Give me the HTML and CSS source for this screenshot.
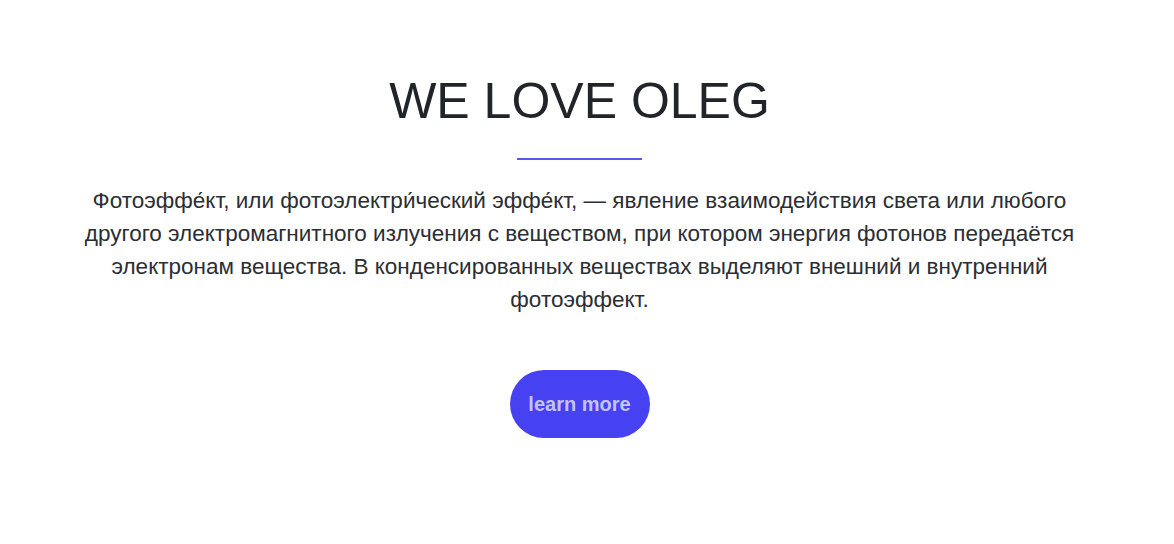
FILE: index.html
```html
<!DOCTYPE html>
<html lang="ru">
<head>
<meta charset="utf-8">
<title>We love Oleg</title>
<link rel="stylesheet" href="styles.css">
</head>
<body>
<section class="hero">
  <h1 class="hero-title">WE LOVE OLEG</h1>
  <div class="hero-divider"></div>
  <p class="hero-text">Фотоэффе́кт, или фотоэлектри́ческий эффе́кт, — явление взаимодействия света или любого другого электромагнитного излучения с веществом, при котором энергия фотонов передаётся электронам вещества. В конденсированных веществах выделяют внешний и внутренний фотоэффект.</p>
  <a class="hero-button" href="#">learn more</a>
</section>
</body>
</html>
```

FILE: styles.css
```css
html, body {
  margin: 0;
  padding: 0;
  background: #ffffff;
}

body {
  font-family: "Liberation Sans", Arial, sans-serif;
  color: #212529;
}

.hero {
  display: flex;
  flex-direction: column;
  align-items: center;
  padding: 72px 15px 0 0;
}

.hero-title {
  margin: 0;
  font-size: 50px;
  font-weight: 400;
  line-height: 58px;
  color: #212529;
}

.hero-divider {
  width: 125px;
  height: 2px;
  background: #5558ee;
  margin-top: 28px;
}

.hero-text {
  margin: 24px 0 0;
  max-width: 1020px;
  text-align: center;
  font-size: 22.5px;
  line-height: 33px;
  color: #2b2e33;
}

.hero-button {
  margin-top: 54px;
  display: flex;
  align-items: center;
  justify-content: center;
  width: 140px;
  height: 68px;
  border-radius: 34px;
  background: #4641f1;
  color: #c3c4fb;
  font-weight: 700;
  font-size: 20px;
  text-decoration: none;
}
```
